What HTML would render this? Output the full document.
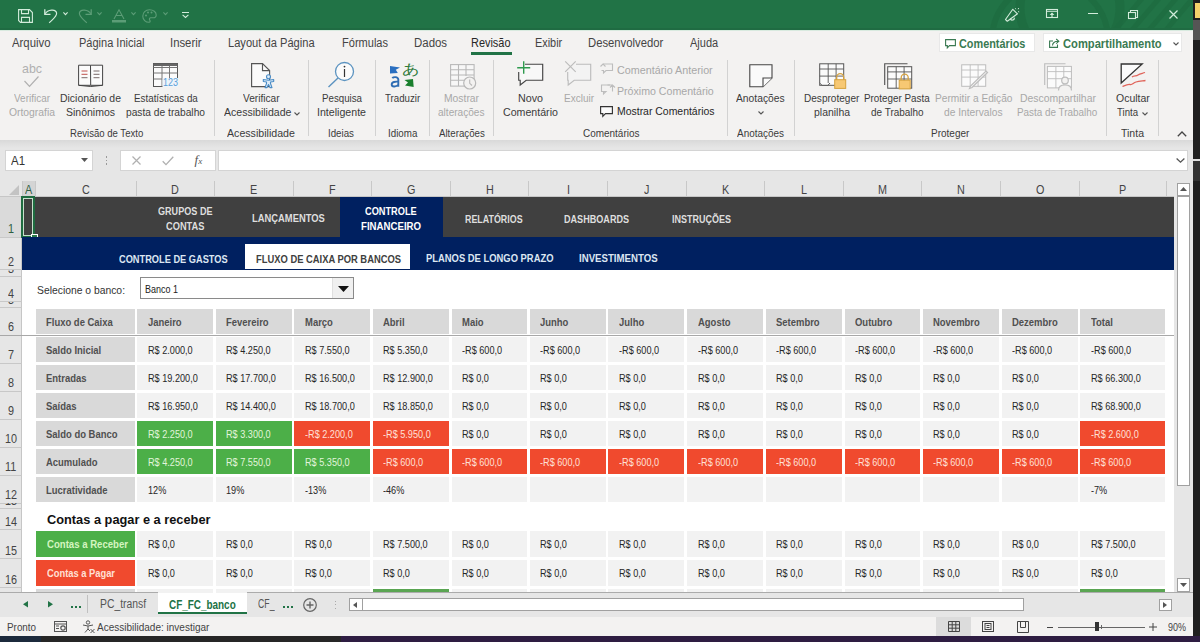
<!DOCTYPE html><html><head><meta charset="utf-8"><style>
html,body{margin:0;padding:0;}
body{width:1200px;height:642px;position:relative;overflow:hidden;background:#f3f2f1;font-family:"Liberation Sans",sans-serif;}
.a{position:absolute;}
.t{position:absolute;white-space:pre;transform-origin:0 50%;}
svg{overflow:visible;}
</style></head><body>
<div class="a" style="left:0px;top:0px;width:1193px;height:29.5px;background:#217346;"></div>
<svg class="a" style="left:900px;top:0;overflow:hidden" width="293" height="28" viewBox="0 0 293 28"><g fill="none" stroke="#1d6b40" stroke-opacity="0.75"><circle cx="170" cy="8" r="50" stroke-width="9"/><circle cx="150" cy="40" r="58" stroke-width="6"/><path d="M215 30L245 -5M232 30L262 -5M249 30L279 -5M266 30L293 -2" stroke-width="5"/></g></svg>
<div class="a" style="left:0px;top:27.5px;width:1193px;height:2px;background:#1f6b42;"></div>
<div class="a" style="left:0px;top:29.5px;width:1193px;height:1px;background:#d8eadf;"></div>
<div class="a" style="left:1193px;top:0px;width:7px;height:642px;background:#1f1f1f;"></div>
<div class="a" style="left:1195px;top:2.5px;width:5px;height:15px;background:#f5d16a;"></div>
<div class="a" style="left:1193px;top:20px;width:7px;height:20px;background:#555;"></div>
<div class="a" style="left:1193px;top:159px;width:7px;height:1.5px;background:#e0e0e0;"></div>
<div class="a" style="left:1193px;top:160.5px;width:7px;height:20px;background:#333;"></div>
<svg class="a" style="left:18px;top:9px;" width="15" height="14" viewBox="0 0 15 14"><path d="M0.6 0.6H11.5L14.4 3.5V13.4H2.5L0.6 11.5Z M3.5 0.6V4.6H10.5V0.6 M3.5 13.4V8.4H11.5V13.4" stroke="#d3ecdb" stroke-width="1.1" fill="none"/></svg>
<svg class="a" style="left:44px;top:9px;" width="15" height="15" viewBox="0 0 15 15"><path d="M0.8 0.2V5.3H6.5" stroke="#d3ecdb" stroke-width="1.3" fill="none"/><path d="M1.2 4.8C3.5 0.5 12 -0.5 12.6 4.2C13 7.5 8.5 10.5 5.2 13.8" stroke="#d3ecdb" stroke-width="1.2" fill="none"/></svg>
<svg class="a" style="left:62.5px;top:12px;" width="5" height="3" viewBox="0 0 5 3"><path d="M0.4 0.4L2.5 2.6L4.6 0.4" stroke="#d3ecdb" stroke-width="1.1" fill="none"/></svg>
<svg class="a" style="left:78px;top:9px;" width="15" height="15" viewBox="0 0 15 15"><path d="M13.2 0.2V5.3H7.5" stroke="#5c9d77" stroke-width="1.3" fill="none"/><path d="M12.8 4.8C10.5 0.5 2 -0.5 1.4 4.2C1 7.5 5.5 10.5 8.8 13.8" stroke="#5c9d77" stroke-width="1.2" fill="none"/></svg>
<svg class="a" style="left:97px;top:12px;" width="5" height="3" viewBox="0 0 5 3"><path d="M0.4 0.4L2.5 2.6L4.6 0.4" stroke="#5c9d77" stroke-width="1.1" fill="none"/></svg>
<svg class="a" style="left:112px;top:9px;" width="14" height="14" viewBox="0 0 14 14"><path d="M2 10L7 0.8L12 10M4 6.5H10" stroke="#5c9d77" stroke-width="1.1" fill="none"/><rect x="0" y="11" width="14" height="2.5" fill="#5c9d77"/></svg>
<svg class="a" style="left:131px;top:12px;" width="5" height="3" viewBox="0 0 5 3"><path d="M0.4 0.4L2.5 2.6L4.6 0.4" stroke="#5c9d77" stroke-width="1.1" fill="none"/></svg>
<svg class="a" style="left:142px;top:9px;" width="15" height="14" viewBox="0 0 15 14"><path d="M7.5 0.8C3.5 0.8 0.8 3.7 0.8 7.2C0.8 10.7 3.6 13.3 7 13.3C8.6 13.3 8.3 11.7 7.6 10.8C7 10 7.6 8.8 8.7 8.8H11C12.8 8.8 14.2 7.6 14.2 5.9C14.2 3 11.3 0.8 7.5 0.8Z" stroke="#5c9d77" stroke-width="1.1" fill="none"/><circle cx="4" cy="6.5" r="1" fill="#5c9d77"/><circle cx="6" cy="3.5" r="1" fill="#5c9d77"/><circle cx="9.5" cy="3.5" r="1" fill="#5c9d77"/></svg>
<svg class="a" style="left:162.5px;top:12px;" width="5" height="3" viewBox="0 0 5 3"><path d="M0.4 0.4L2.5 2.6L4.6 0.4" stroke="#5c9d77" stroke-width="1.1" fill="none"/></svg>
<svg class="a" style="left:181.5px;top:11.5px;" width="7" height="6" viewBox="0 0 7 6"><path d="M0 0.5H7M0.6 2.8L3.5 5.5L6.4 2.8" stroke="#d3ecdb" stroke-width="1.1" fill="none"/></svg>
<svg class="a" style="left:1005px;top:8px;" width="15" height="15" viewBox="0 0 15 15"><path d="M0.5 11.5L7.8 1.3L12.5 5.8L2.3 13.3Z" stroke="#d3ecdb" stroke-width="1.1" fill="none" stroke-linejoin="round"/><path d="M5.3 10.6A2 2 0 0 0 9.2 9.6" stroke="#d3ecdb" stroke-width="1.1" fill="none"/><path d="M10.4 0.3L10.8 1.2M13.6 0.1L13.2 1.2M13.1 3.6L14.2 3.9" stroke="#d3ecdb" stroke-width="1"/></svg>
<svg class="a" style="left:1046px;top:9px;" width="12" height="9" viewBox="0 0 12 9"><rect x="0.5" y="0.5" width="11" height="8" fill="none" stroke="#d3ecdb" stroke-width="1.1"/><path d="M0.5 2.3H11.5" stroke="#d3ecdb"/><path d="M6 4.5V8" stroke="#d3ecdb" stroke-width="1.2"/><path d="M3.6 6L6 3.6L8.4 6Z" fill="#d3ecdb"/></svg>
<div class="a" style="left:1088px;top:13.3px;width:9.5px;height:1.1px;background:#d3ecdb;"></div>
<svg class="a" style="left:1128px;top:9.5px;" width="10" height="9" viewBox="0 0 10 9"><path d="M2.5 2.5V0.5H9.5V7.5H7.5" stroke="#d3ecdb" fill="none" stroke-width="1.1"/><rect x="0.5" y="2.5" width="7" height="6" fill="none" stroke="#d3ecdb" stroke-width="1.1"/></svg>
<svg class="a" style="left:1169px;top:9.5px;" width="9" height="9" viewBox="0 0 9 9"><path d="M0.5 0.5L8.5 8.5M8.5 0.5L0.5 8.5" stroke="#d3ecdb" stroke-width="1.2"/></svg>
<div class="t" style="left:12.30px;top:37.00px;font-size:12.5px;line-height:12.5px;color:#444;font-weight:400;transform:scaleX(0.9083);">Arquivo</div>
<div class="t" style="left:78.50px;top:37.00px;font-size:12.5px;line-height:12.5px;color:#444;font-weight:400;transform:scaleX(0.8809);">Página Inicial</div>
<div class="t" style="left:170.00px;top:37.00px;font-size:12.5px;line-height:12.5px;color:#444;font-weight:400;transform:scaleX(0.9070);">Inserir</div>
<div class="t" style="left:228.40px;top:37.00px;font-size:12.5px;line-height:12.5px;color:#444;font-weight:400;transform:scaleX(0.8900);">Layout da Página</div>
<div class="t" style="left:342.40px;top:37.00px;font-size:12.5px;line-height:12.5px;color:#444;font-weight:400;transform:scaleX(0.8830);">Fórmulas</div>
<div class="t" style="left:414.40px;top:37.00px;font-size:12.5px;line-height:12.5px;color:#444;font-weight:400;transform:scaleX(0.9160);">Dados</div>
<div class="t" style="left:471.20px;top:37.00px;font-size:12.5px;line-height:12.5px;color:#262626;font-weight:400;transform:scaleX(0.8746);">Revisão</div>
<div class="a" style="left:471px;top:52.3px;width:40.5px;height:2.6px;background:#217346;"></div>
<div class="t" style="left:534.70px;top:37.00px;font-size:12.5px;line-height:12.5px;color:#444;font-weight:400;transform:scaleX(0.8702);">Exibir</div>
<div class="t" style="left:588.00px;top:37.00px;font-size:12.5px;line-height:12.5px;color:#444;font-weight:400;transform:scaleX(0.9019);">Desenvolvedor</div>
<div class="t" style="left:689.90px;top:37.00px;font-size:12.5px;line-height:12.5px;color:#444;font-weight:400;transform:scaleX(0.8789);">Ajuda</div>
<div class="a" style="left:938.6px;top:33px;width:96px;height:19.3px;background:#ffffff;box-sizing:border-box;border:1px solid #e8e8e8;"></div>
<svg class="a" style="left:945px;top:38.5px;" width="11" height="10" viewBox="0 0 11 10"><path d="M0.6 0.6H10.4V6.6H4.5L2.3 8.8V6.6H0.6Z" stroke="#3a7a52" stroke-width="1.1" fill="none"/></svg>
<div class="t" style="left:959.30px;top:38.00px;font-size:12.5px;line-height:12.5px;color:#3a7a52;font-weight:700;transform:scaleX(0.8690);">Comentários</div>
<div class="a" style="left:1042.5px;top:33px;width:139.5px;height:19.3px;background:#ffffff;box-sizing:border-box;border:1px solid #e8e8e8;"></div>
<svg class="a" style="left:1049px;top:37.5px;" width="11" height="10" viewBox="0 0 11 10"><path d="M4 3H0.6V9.4H8.5V6.5" stroke="#3a7a52" stroke-width="1.1" fill="none"/><path d="M3.5 7.5C3.5 5 5.5 3.3 9 3.3M7.2 1L9.8 3.3L7.2 5.6" stroke="#3a7a52" stroke-width="1.1" fill="none"/></svg>
<div class="t" style="left:1063.30px;top:38.00px;font-size:12.5px;line-height:12.5px;color:#3a7a52;font-weight:700;transform:scaleX(0.8938);">Compartilhamento</div>
<svg class="a" style="left:1172.5px;top:41.8px;" width="6" height="4" viewBox="0 0 6 4"><path d="M0.5 0.5L3 3L5.5 0.5" stroke="#555" stroke-width="1.1" fill="none"/></svg>
<div class="a" style="left:214.1px;top:60px;width:1px;height:76px;background:#d2d2d2;"></div>
<div class="a" style="left:307.5px;top:60px;width:1px;height:76px;background:#d2d2d2;"></div>
<div class="a" style="left:375.1px;top:60px;width:1px;height:76px;background:#d2d2d2;"></div>
<div class="a" style="left:429.1px;top:60px;width:1px;height:76px;background:#d2d2d2;"></div>
<div class="a" style="left:492.8px;top:60px;width:1px;height:76px;background:#d2d2d2;"></div>
<div class="a" style="left:726.9px;top:60px;width:1px;height:76px;background:#d2d2d2;"></div>
<div class="a" style="left:793.9px;top:60px;width:1px;height:76px;background:#d2d2d2;"></div>
<div class="a" style="left:1106.1px;top:60px;width:1px;height:76px;background:#d2d2d2;"></div>
<div class="a" style="left:1157.9px;top:60px;width:1px;height:76px;background:#d2d2d2;"></div>
<div class="t" style="left:14.00px;top:93.00px;font-size:11.5px;line-height:11.5px;color:#a8a8a8;font-weight:400;transform:scaleX(0.8666);">Verificar</div>
<div class="t" style="left:9.00px;top:107.00px;font-size:11.5px;line-height:11.5px;color:#a8a8a8;font-weight:400;transform:scaleX(0.8996);">Ortografia</div>
<div class="t" style="left:21.70px;top:62.00px;font-size:13.5px;line-height:13.5px;color:#b0b0b0;font-weight:400;transform:scaleX(0.9188);">abc</div>
<svg class="a" style="left:24px;top:76px;" width="15" height="11" viewBox="0 0 15 11"><path d="M0.5 5L5.5 10.3L14.5 0.5" stroke="#b0b0b0" stroke-width="1.2" fill="none"/></svg>
<div class="t" style="left:60.00px;top:93.00px;font-size:11.5px;line-height:11.5px;color:#3b3b3b;font-weight:400;transform:scaleX(0.9088);">Dicionário de</div>
<div class="t" style="left:66.00px;top:107.00px;font-size:11.5px;line-height:11.5px;color:#3b3b3b;font-weight:400;transform:scaleX(0.9126);">Sinônimos</div>
<svg class="a" style="left:77.5px;top:63.5px;" width="26" height="23" viewBox="0 0 26 23"><path d="M0.6 1.2H12.5L12.7 21.3H0.6Z M12.7 1.2H24.6V21.3H12.7 M0.6 21.3L12.7 22.5L24.6 21.3" stroke="#444" stroke-width="1" fill="#fbfbfb"/><path d="M3.5 7H9.5M3.5 10.3H9.5" stroke="#c0504d" stroke-width="1"/><path d="M3.5 13.7H9.5M15.5 7H21.5M15.5 10.3H21.5M15.5 13.7H21.5" stroke="#7a6a6a" stroke-width="1"/></svg>
<div class="t" style="left:133.60px;top:93.00px;font-size:11.5px;line-height:11.5px;color:#3b3b3b;font-weight:400;transform:scaleX(0.8531);">Estatísticas da</div>
<div class="t" style="left:126.00px;top:107.00px;font-size:11.5px;line-height:11.5px;color:#3b3b3b;font-weight:400;transform:scaleX(0.8889);">pasta de trabalho</div>
<svg class="a" style="left:153px;top:63px;" width="26" height="25" viewBox="0 0 26 25"><rect x="0.5" y="0.5" width="24" height="23" fill="#fbfbfb" stroke="#555" stroke-width="1"/><rect x="0.5" y="0.5" width="24" height="2.5" fill="#666"/><path d="M0.5 4.5H24.5M0.5 10H24.5M0.5 16H24.5M9 3V23.5M16.5 3V23.5" stroke="#777" stroke-width="1"/><rect x="9.5" y="15" width="15.5" height="9" fill="#eef4fa"/></svg>
<div class="t" style="left:163.00px;top:77.00px;font-size:11.5px;line-height:11.5px;color:#5a9fd8;font-weight:400;transform:scaleX(0.7817);">123</div>
<div class="t" style="left:70.30px;top:128.00px;font-size:11.2px;line-height:11.2px;color:#3b3b3b;font-weight:400;transform:scaleX(0.8552);">Revisão de Texto</div>
<div class="t" style="left:243.00px;top:93.00px;font-size:11.5px;line-height:11.5px;color:#3b3b3b;font-weight:400;transform:scaleX(0.8810);">Verificar</div>
<div class="t" style="left:223.60px;top:107.00px;font-size:11.5px;line-height:11.5px;color:#3b3b3b;font-weight:400;transform:scaleX(0.9168);">Acessibilidade</div>
<svg class="a" style="left:294px;top:111.5px;" width="6" height="4" viewBox="0 0 6 4"><path d="M0.5 0.5L3 3L5.5 0.5" stroke="#555" stroke-width="1.1" fill="none"/></svg>
<svg class="a" style="left:251px;top:63px;" width="25" height="26" viewBox="0 0 25 26"><path d="M0.6 0.6H11.5L18.6 7.6V23.6H0.6Z" fill="#fbfbfb" stroke="#555" stroke-width="1.15"/><path d="M11.5 0.6V7.6H18.6" fill="none" stroke="#555" stroke-width="1.15"/><circle cx="17.5" cy="13.8" r="2" fill="#dcebf8" stroke="#4a8cc6" stroke-width="1.1"/><path d="M12.3 16.5L17.5 17.3L22.7 16.5V18.5L19.5 19V20.5L21 24.6H19L17.5 21.5L16 24.6H14L15.5 20.5V19L12.3 18.5Z" fill="#dcebf8" stroke="#4a8cc6" stroke-width="1.1" stroke-linejoin="round"/></svg>
<div class="t" style="left:227.00px;top:128.00px;font-size:11.2px;line-height:11.2px;color:#3b3b3b;font-weight:400;transform:scaleX(0.9497);">Acessibilidade</div>
<div class="t" style="left:321.60px;top:93.00px;font-size:11.5px;line-height:11.5px;color:#3b3b3b;font-weight:400;transform:scaleX(0.8455);">Pesquisa</div>
<div class="t" style="left:317.00px;top:107.00px;font-size:11.5px;line-height:11.5px;color:#3b3b3b;font-weight:400;transform:scaleX(0.9233);">Inteligente</div>
<svg class="a" style="left:327px;top:61px;" width="30" height="28" viewBox="0 0 30 28"><circle cx="17.5" cy="10.5" r="9" fill="#fbfbfb" stroke="#5b93c0" stroke-width="1.3"/><path d="M11 17L1.5 26" stroke="#5b93c0" stroke-width="1.4"/><circle cx="17.5" cy="5.6" r="0.9" fill="#333"/><path d="M17.5 8V16" stroke="#333" stroke-width="1.2"/></svg>
<div class="t" style="left:328.00px;top:128.00px;font-size:11.2px;line-height:11.2px;color:#3b3b3b;font-weight:400;transform:scaleX(0.8699);">Ideias</div>
<div class="t" style="left:384.80px;top:93.00px;font-size:11.5px;line-height:11.5px;color:#3b3b3b;font-weight:400;transform:scaleX(0.8431);">Traduzir</div>
<svg class="a" style="left:389px;top:62px;" width="27" height="26" viewBox="0 0 27 26"><path d="M1 4L11 5.5L6.8 7.8L8.8 11L1 11.5Z" fill="#2a6fc0"/><path d="M15.5 18L19 20.5L16 23.5L24.7 25L24 17Z" fill="#1a7f2e"/><path d="M3.3 16.2C4.5 14.7 8.8 14.6 9.3 17.3V24.8M9.3 19.8C6.8 19.4 2.7 19.9 2.7 22.4C2.7 24.9 6.8 25.2 9.3 22.9" stroke="#2f6db3" stroke-width="1.9" fill="none"/></svg>
<div class="t" style="left:401.50px;top:63.00px;font-size:13.5px;line-height:13.5px;color:#2d7a3a;font-weight:400;transform:scaleX(1.2346);">あ</div>
<div class="t" style="left:387.60px;top:128.00px;font-size:11.2px;line-height:11.2px;color:#3b3b3b;font-weight:400;transform:scaleX(0.8745);">Idioma</div>
<div class="t" style="left:444.00px;top:93.00px;font-size:11.5px;line-height:11.5px;color:#a8a8a8;font-weight:400;transform:scaleX(0.8980);">Mostrar</div>
<div class="t" style="left:438.00px;top:107.00px;font-size:11.5px;line-height:11.5px;color:#a8a8a8;font-weight:400;transform:scaleX(0.8764);">alterações</div>
<svg class="a" style="left:449.5px;top:63.5px;" width="28" height="26" viewBox="0 0 28 26"><rect x="0.6" y="0.6" width="23.5" height="21.5" fill="#f7f7f7" stroke="#b8b8b8" stroke-width="1.1"/><path d="M0.6 5.7H24M0.6 11H24M0.6 16.2H14M8.5 0.6V22M16 0.6V12" stroke="#b8b8b8" stroke-width="1.1"/><circle cx="19.7" cy="19" r="6" fill="#f3f2f1" stroke="#b8b8b8" stroke-width="1.2"/><path d="M19.7 15.5V19.3L22 21.5" stroke="#b8b8b8" stroke-width="1.1" fill="none"/></svg>
<div class="t" style="left:438.70px;top:128.00px;font-size:11.2px;line-height:11.2px;color:#3b3b3b;font-weight:400;transform:scaleX(0.8655);">Alterações</div>
<div class="t" style="left:518.00px;top:93.00px;font-size:11.5px;line-height:11.5px;color:#3b3b3b;font-weight:400;transform:scaleX(0.9312);">Novo</div>
<div class="t" style="left:503.00px;top:107.00px;font-size:11.5px;line-height:11.5px;color:#3b3b3b;font-weight:400;transform:scaleX(0.9235);">Comentário</div>
<svg class="a" style="left:516px;top:60px;" width="28" height="26" viewBox="0 0 28 26"><path d="M9 4.2H26.7V20.2H10.2L4.2 25V20.2H2.7V12" fill="#f8f8f8" stroke="#444" stroke-width="1.15"/><path d="M7.7 1.3V13.7M1.2 7.7H14.2" stroke="#2e9a4e" stroke-width="1.4"/></svg>
<div class="t" style="left:564.00px;top:93.00px;font-size:11.5px;line-height:11.5px;color:#a8a8a8;font-weight:400;transform:scaleX(0.8694);">Excluir</div>
<svg class="a" style="left:564px;top:60px;" width="28" height="26" viewBox="0 0 28 26"><path d="M12 4.2H26.7V20.2H10.2L4.2 25V20.2H3.7V12" fill="#f3f3f3" stroke="#bcbcbc" stroke-width="1.15"/><path d="M1.2 1.3L11.7 11.8M11.7 1.3L1.2 11.8" stroke="#bcbcbc" stroke-width="1.2"/></svg>
<svg class="a" style="left:600px;top:63px;" width="13" height="11" viewBox="0 0 13 11"><path d="M3 1H12.5V7.5H6L3.5 10V7.5H1.5" fill="none" stroke="#bdbdbd" stroke-width="1.1"/><path d="M0.5 3.5L3 1L5.5 3.5" fill="none" stroke="#bdbdbd" stroke-width="1.1"/></svg>
<div class="t" style="left:616.80px;top:65.00px;font-size:11.5px;line-height:11.5px;color:#a8a8a8;font-weight:400;transform:scaleX(0.9357);">Comentário Anterior</div>
<svg class="a" style="left:600px;top:84px;" width="13" height="11" viewBox="0 0 13 11"><path d="M10 1H1.5V7.5H6L3.5 10V7.5" fill="none" stroke="#bdbdbd" stroke-width="1.1"/><path d="M7.5 1H12.5V7.5M10 3.5L12.5 1L15 3.5" fill="none" stroke="#bdbdbd" stroke-width="1.1"/></svg>
<div class="t" style="left:616.80px;top:86.00px;font-size:11.5px;line-height:11.5px;color:#a8a8a8;font-weight:400;transform:scaleX(0.9226);">Próximo Comentário</div>
<svg class="a" style="left:600px;top:105.5px;" width="13" height="11" viewBox="0 0 13 11"><path d="M0.6 0.6H12.4V7.6H5.5L2.8 10.4V7.6H0.6Z" fill="#fbfbfb" stroke="#333" stroke-width="1.15"/></svg>
<div class="t" style="left:616.80px;top:106.00px;font-size:11.5px;line-height:11.5px;color:#262626;font-weight:400;transform:scaleX(0.9081);">Mostrar Comentários</div>
<div class="t" style="left:582.70px;top:128.00px;font-size:11.2px;line-height:11.2px;color:#3b3b3b;font-weight:400;transform:scaleX(0.8898);">Comentários</div>
<svg class="a" style="left:748.5px;top:63.5px;" width="24" height="24" viewBox="0 0 24 24"><path d="M0.8 0.8H23V14L14 22.8H0.8Z" fill="#fafafa" stroke="#444" stroke-width="1.1"/><path d="M23 14H14V22.8" fill="#fafafa" stroke="#444" stroke-width="1.1"/></svg>
<div class="t" style="left:736.40px;top:93.00px;font-size:11.5px;line-height:11.5px;color:#3b3b3b;font-weight:400;transform:scaleX(0.8943);">Anotações</div>
<svg class="a" style="left:757.5px;top:110.5px;" width="6" height="4" viewBox="0 0 6 4"><path d="M0.5 0.5L3 3L5.5 0.5" stroke="#555" stroke-width="1.1" fill="none"/></svg>
<div class="t" style="left:737.00px;top:128.00px;font-size:11.2px;line-height:11.2px;color:#3b3b3b;font-weight:400;transform:scaleX(0.8880);">Anotações</div>
<svg class="a" style="left:818.5px;top:63px;" width="30" height="27" viewBox="0 0 30 27"><rect x="0.7" y="0.8" width="24" height="21.5" fill="#fbfbfb" stroke="#555" stroke-width="1"/><path d="M0.7 6.0H24.7M0.7 13.100000000000001H24.7M9.2 0.8V22.3M17.099999999999998 0.8V22.3" stroke="#555" stroke-width="0.9"/><path d="M0.7 20L3 22.3H9L11 20" stroke="#555" fill="#fbfbfb" stroke-width="1"/><path d="M17.7 16.7V14.2A3.5 3.5 0 0 1 24.7 14.2V16.7" fill="none" stroke="#d6a23e" stroke-width="1.3"/><rect x="15.7" y="16.7" width="11" height="8.7" fill="#f7c873" stroke="#d6a23e" stroke-width="1"/></svg>
<div class="t" style="left:803.60px;top:93.00px;font-size:11.5px;line-height:11.5px;color:#3b3b3b;font-weight:400;transform:scaleX(0.8754);">Desproteger</div>
<div class="t" style="left:813.60px;top:107.00px;font-size:11.5px;line-height:11.5px;color:#3b3b3b;font-weight:400;transform:scaleX(0.9081);">planilha</div>
<svg class="a" style="left:884px;top:62.5px;" width="30" height="28" viewBox="0 0 30 28"><path d="M0.7 22V0.7H23.5" stroke="#555" fill="none" stroke-width="1.15"/><rect x="3.7" y="3.7" width="24" height="21.5" fill="#fbfbfb" stroke="#555" stroke-width="1"/><path d="M3.7 8.9H27.7M3.7 16.0H27.7M12.2 3.7V25.2M20.099999999999998 3.7V25.2" stroke="#555" stroke-width="0.9"/><path d="M17.2 17.2V14.7A3.5 3.5 0 0 1 24.2 14.7V17.2" fill="none" stroke="#d6a23e" stroke-width="1.3"/><rect x="15.2" y="17.2" width="11" height="8.7" fill="#f7c873" stroke="#d6a23e" stroke-width="1"/></svg>
<div class="t" style="left:864.00px;top:93.00px;font-size:11.5px;line-height:11.5px;color:#3b3b3b;font-weight:400;transform:scaleX(0.8551);">Proteger Pasta</div>
<div class="t" style="left:871.00px;top:107.00px;font-size:11.5px;line-height:11.5px;color:#3b3b3b;font-weight:400;transform:scaleX(0.8660);">de Trabalho</div>
<svg class="a" style="left:960.5px;top:64px;" width="30" height="26" viewBox="0 0 30 26"><rect x="0.7" y="0.8" width="24" height="21.5" fill="#fbfbfb" stroke="#bdbdbd" stroke-width="1"/><path d="M0.7 6.0H24.7M0.7 13.100000000000001H24.7M9.2 0.8V22.3M17.099999999999998 0.8V22.3" stroke="#bdbdbd" stroke-width="0.9"/><path d="M26.5 8.5L11 23.5L8.5 24.5L9.5 22L25 7Z" fill="#f3f2f1" stroke="#bdbdbd" stroke-width="1.2"/></svg>
<div class="t" style="left:934.50px;top:93.00px;font-size:11.5px;line-height:11.5px;color:#a8a8a8;font-weight:400;transform:scaleX(0.8851);">Permitir a Edição</div>
<div class="t" style="left:944.00px;top:107.00px;font-size:11.5px;line-height:11.5px;color:#a8a8a8;font-weight:400;transform:scaleX(0.8884);">de Intervalos</div>
<svg class="a" style="left:1043.5px;top:62.5px;" width="30" height="28" viewBox="0 0 30 28"><path d="M0.7 22V0.7H21.5" stroke="#bdbdbd" fill="none" stroke-width="1.15"/><rect x="3.4" y="3.4" width="24" height="21.5" fill="#fbfbfb" stroke="#bdbdbd" stroke-width="1"/><path d="M3.4 8.6H27.4M3.4 15.700000000000001H27.4M11.9 3.4V24.9M19.799999999999997 3.4V24.9" stroke="#bdbdbd" stroke-width="0.9"/><circle cx="21" cy="17.5" r="3.3" fill="#f3f2f1" stroke="#bdbdbd" stroke-width="1.2"/><path d="M14.5 27.5C14.5 23.5 17.5 21.8 21 21.8C24.5 21.8 27.5 23.5 27.5 27.5" fill="#f3f2f1" stroke="#bdbdbd" stroke-width="1.2"/></svg>
<div class="t" style="left:1019.60px;top:93.00px;font-size:11.5px;line-height:11.5px;color:#a8a8a8;font-weight:400;transform:scaleX(0.9065);">Descompartilhar</div>
<div class="t" style="left:1016.70px;top:107.00px;font-size:11.5px;line-height:11.5px;color:#a8a8a8;font-weight:400;transform:scaleX(0.8602);">Pasta de Trabalho</div>
<div class="t" style="left:931.00px;top:128.00px;font-size:11.2px;line-height:11.2px;color:#3b3b3b;font-weight:400;transform:scaleX(0.8939);">Proteger</div>
<svg class="a" style="left:1119.5px;top:62.5px;" width="28" height="26" viewBox="0 0 28 26"><path d="M1.2 1H22.2L1.2 20Z" fill="#fbfbfb" stroke="#333" stroke-width="1.3"/><path d="M2.5 23.5C6 22 8 21 10 21.5C12.5 22 13 20 16 19C19 18 22 18 25.5 17.5" stroke="#e0645a" stroke-width="1.3" fill="none"/><path d="M12 14C14 12 16 13.5 18 12C20 10.5 22 10.5 25 9.5" stroke="#e0645a" stroke-width="1.3" fill="none"/></svg>
<div class="t" style="left:1115.60px;top:93.00px;font-size:11.5px;line-height:11.5px;color:#3b3b3b;font-weight:400;transform:scaleX(0.9119);">Ocultar</div>
<div class="t" style="left:1117.00px;top:107.00px;font-size:11.5px;line-height:11.5px;color:#3b3b3b;font-weight:400;transform:scaleX(0.8353);">Tinta</div>
<svg class="a" style="left:1141.5px;top:111.5px;" width="6" height="4" viewBox="0 0 6 4"><path d="M0.5 0.5L3 3L5.5 0.5" stroke="#555" stroke-width="1.1" fill="none"/></svg>
<div class="t" style="left:1121.00px;top:128.00px;font-size:11.2px;line-height:11.2px;color:#3b3b3b;font-weight:400;transform:scaleX(0.9394);">Tinta</div>
<svg class="a" style="left:1176.5px;top:131px;" width="10" height="6" viewBox="0 0 10 6"><path d="M0.8 5.2L5 1L9.2 5.2" stroke="#444" stroke-width="1.3" fill="none"/></svg>
<div class="a" style="left:0px;top:140px;width:1193px;height:41px;background:#e6e6e6;"></div>
<div class="a" style="left:0px;top:140px;width:1193px;height:8px;background:linear-gradient(#d9d9d9,#e6e6e6);"></div>
<div class="a" style="left:5px;top:150px;width:88px;height:21px;background:#ffffff;box-sizing:border-box;border:1px solid #d4d4d4;"></div>
<div class="t" style="left:11.00px;top:155.00px;font-size:12.5px;line-height:12.5px;color:#333;font-weight:400;transform:scaleX(0.9156);">A1</div>
<svg class="a" style="left:81px;top:158px;" width="7" height="4" viewBox="0 0 7 4"><path d="M0 0H7L3.5 4Z" fill="#555"/></svg>
<div class="a" style="left:105.5px;top:156.3px;width:1.5px;height:1.5px;background:#999;"></div>
<div class="a" style="left:105.5px;top:159.8px;width:1.5px;height:1.5px;background:#999;"></div>
<div class="a" style="left:105.5px;top:163.3px;width:1.5px;height:1.5px;background:#999;"></div>
<div class="a" style="left:120px;top:150px;width:95.5px;height:21px;background:#ffffff;box-sizing:border-box;border:1px solid #d4d4d4;"></div>
<svg class="a" style="left:132px;top:156px;" width="9" height="9" viewBox="0 0 9 9"><path d="M0.5 0.5L8.5 8.5M8.5 0.5L0.5 8.5" stroke="#b0b0b0" stroke-width="1.2" fill="none"/></svg>
<svg class="a" style="left:162px;top:155.5px;" width="12" height="10" viewBox="0 0 12 10"><path d="M0.7 5.2L4 8.6L11.3 0.8" stroke="#b0b0b0" stroke-width="1.3" fill="none"/></svg>
<div class="t" style="left:194.5px;top:152.5px;font-family:'Liberation Serif';font-style:italic;font-size:13px;line-height:13px;color:#555;">f<span style="font-size:9px">x</span></div>
<div class="a" style="left:218px;top:150px;width:970px;height:21px;background:#ffffff;box-sizing:border-box;border:1px solid #d4d4d4;"></div>
<svg class="a" style="left:1176px;top:158px;" width="9" height="5" viewBox="0 0 9 5"><path d="M0.6 0.6L4.5 4.2L8.4 0.6" stroke="#555" stroke-width="1.3" fill="none"/></svg>
<div class="a" style="left:0px;top:181px;width:1174px;height:16px;background:#e6e6e6;"></div>
<div class="a" style="left:0px;top:197px;width:22px;height:395.5px;background:#e6e6e6;"></div>
<div class="a" style="left:22px;top:197px;width:1152px;height:395.5px;background:#ffffff;"></div>
<svg class="a" style="left:9px;top:185px;" width="10" height="10" viewBox="0 0 10 10"><path d="M10 0V10H0Z" fill="#c3c3c3"/></svg>
<div class="a" style="left:22.4px;top:181px;width:12.6px;height:14.5px;background:#d4d4d4;"></div>
<div class="a" style="left:35px;top:181px;width:1px;height:16px;background:#c8c8c8;"></div>
<div class="t" style="left:24.90px;top:184.00px;font-size:12px;line-height:12px;color:#2e5e42;font-weight:400;transform:scaleX(0.9000);">A</div>
<div class="a" style="left:136px;top:181px;width:1px;height:16px;background:#c8c8c8;"></div>
<div class="t" style="left:81.60px;top:184.00px;font-size:12px;line-height:12px;color:#444;font-weight:400;transform:scaleX(0.9000);">C</div>
<div class="a" style="left:214px;top:181px;width:1px;height:16px;background:#c8c8c8;"></div>
<div class="t" style="left:171.40px;top:184.00px;font-size:12px;line-height:12px;color:#444;font-weight:400;transform:scaleX(0.9000);">D</div>
<div class="a" style="left:293px;top:181px;width:1px;height:16px;background:#c8c8c8;"></div>
<div class="t" style="left:250.30px;top:184.00px;font-size:12px;line-height:12px;color:#444;font-weight:400;transform:scaleX(0.9000);">E</div>
<div class="a" style="left:371px;top:181px;width:1px;height:16px;background:#c8c8c8;"></div>
<div class="t" style="left:329.20px;top:184.00px;font-size:12px;line-height:12px;color:#444;font-weight:400;transform:scaleX(0.9000);">F</div>
<div class="a" style="left:450px;top:181px;width:1px;height:16px;background:#c8c8c8;"></div>
<div class="t" style="left:406.95px;top:184.00px;font-size:12px;line-height:12px;color:#444;font-weight:400;transform:scaleX(0.9000);">G</div>
<div class="a" style="left:528px;top:181px;width:1px;height:16px;background:#c8c8c8;"></div>
<div class="t" style="left:485.75px;top:184.00px;font-size:12px;line-height:12px;color:#444;font-weight:400;transform:scaleX(0.9000);">H</div>
<div class="a" style="left:607px;top:181px;width:1px;height:16px;background:#c8c8c8;"></div>
<div class="t" style="left:566.60px;top:184.00px;font-size:12px;line-height:12px;color:#444;font-weight:400;transform:scaleX(0.9000);">I</div>
<div class="a" style="left:686px;top:181px;width:1px;height:16px;background:#c8c8c8;"></div>
<div class="t" style="left:644.00px;top:184.00px;font-size:12px;line-height:12px;color:#444;font-weight:400;transform:scaleX(0.9000);">J</div>
<div class="a" style="left:764px;top:181px;width:1px;height:16px;background:#c8c8c8;"></div>
<div class="t" style="left:721.70px;top:184.00px;font-size:12px;line-height:12px;color:#444;font-weight:400;transform:scaleX(0.9000);">K</div>
<div class="a" style="left:843px;top:181px;width:1px;height:16px;background:#c8c8c8;"></div>
<div class="t" style="left:801.10px;top:184.00px;font-size:12px;line-height:12px;color:#444;font-weight:400;transform:scaleX(0.9000);">L</div>
<div class="a" style="left:921px;top:181px;width:1px;height:16px;background:#c8c8c8;"></div>
<div class="t" style="left:878.15px;top:184.00px;font-size:12px;line-height:12px;color:#444;font-weight:400;transform:scaleX(0.9000);">M</div>
<div class="a" style="left:1000px;top:181px;width:1px;height:16px;background:#c8c8c8;"></div>
<div class="t" style="left:957.20px;top:184.00px;font-size:12px;line-height:12px;color:#444;font-weight:400;transform:scaleX(0.9000);">N</div>
<div class="a" style="left:1079px;top:181px;width:1px;height:16px;background:#c8c8c8;"></div>
<div class="t" style="left:1035.75px;top:184.00px;font-size:12px;line-height:12px;color:#444;font-weight:400;transform:scaleX(0.9000);">O</div>
<div class="a" style="left:1166px;top:181px;width:1px;height:16px;background:#c8c8c8;"></div>
<div class="t" style="left:1119.30px;top:184.00px;font-size:12px;line-height:12px;color:#444;font-weight:400;transform:scaleX(0.9000);">P</div>
<div class="a" style="left:22px;top:181px;width:1px;height:16px;background:#c8c8c8;"></div>
<div class="a" style="left:0px;top:196px;width:1174px;height:1px;background:#c6c6c6;"></div>
<div class="a" style="left:21px;top:197px;width:1px;height:395.5px;background:#c6c6c6;"></div>
<div class="a" style="left:0px;top:237px;width:22px;height:1px;background:#c8c8c8;"></div>
<div class="a" style="left:0px;top:269px;width:22px;height:1px;background:#c8c8c8;"></div>
<div class="a" style="left:0px;top:276px;width:22px;height:1px;background:#c8c8c8;"></div>
<div class="a" style="left:0px;top:301px;width:22px;height:1px;background:#c8c8c8;"></div>
<div class="a" style="left:0px;top:307px;width:22px;height:1px;background:#c8c8c8;"></div>
<div class="a" style="left:0px;top:335px;width:22px;height:1px;background:#c8c8c8;"></div>
<div class="a" style="left:0px;top:363px;width:22px;height:1px;background:#c8c8c8;"></div>
<div class="a" style="left:0px;top:391px;width:22px;height:1px;background:#c8c8c8;"></div>
<div class="a" style="left:0px;top:419px;width:22px;height:1px;background:#c8c8c8;"></div>
<div class="a" style="left:0px;top:447px;width:22px;height:1px;background:#c8c8c8;"></div>
<div class="a" style="left:0px;top:475px;width:22px;height:1px;background:#c8c8c8;"></div>
<div class="a" style="left:0px;top:503px;width:22px;height:1px;background:#c8c8c8;"></div>
<div class="a" style="left:0px;top:508px;width:22px;height:1px;background:#c8c8c8;"></div>
<div class="a" style="left:0px;top:529px;width:22px;height:1px;background:#c8c8c8;"></div>
<div class="a" style="left:0px;top:558px;width:22px;height:1px;background:#c8c8c8;"></div>
<div class="a" style="left:0px;top:587px;width:22px;height:1px;background:#c8c8c8;"></div>
<div class="a" style="left:0px;top:197px;width:21px;height:40px;background:#dadada;"></div>
<div class="a" style="left:0;top:197px;width:21px;height:40px;overflow:hidden"><div class="t" style="left:8.00px;top:26px;font-size:12px;line-height:12px;color:#2e5e42;transform:scaleX(0.9)">1</div></div>
<div class="a" style="left:0;top:237px;width:21px;height:32.5px;overflow:hidden"><div class="t" style="left:8.00px;top:19px;font-size:12px;line-height:12px;color:#444;transform:scaleX(0.9)">2</div></div>
<div class="a" style="left:0;top:269.5px;width:21px;height:6.800000000000011px;overflow:hidden"><div class="t" style="left:8.00px;top:-7px;font-size:12px;line-height:12px;color:#444;transform:scaleX(0.9)">3</div></div>
<div class="a" style="left:0;top:276.3px;width:21px;height:25.19999999999999px;overflow:hidden"><div class="t" style="left:8.00px;top:12px;font-size:12px;line-height:12px;color:#444;transform:scaleX(0.9)">4</div></div>
<div class="a" style="left:0;top:301.5px;width:21px;height:5.5px;overflow:hidden"><div class="t" style="left:8.00px;top:-8px;font-size:12px;line-height:12px;color:#444;transform:scaleX(0.9)">5</div></div>
<div class="a" style="left:0;top:307px;width:21px;height:28px;overflow:hidden"><div class="t" style="left:8.00px;top:14px;font-size:12px;line-height:12px;color:#444;transform:scaleX(0.9)">6</div></div>
<div class="a" style="left:0;top:335px;width:21px;height:28px;overflow:hidden"><div class="t" style="left:8.00px;top:14px;font-size:12px;line-height:12px;color:#444;transform:scaleX(0.9)">7</div></div>
<div class="a" style="left:0;top:363px;width:21px;height:28px;overflow:hidden"><div class="t" style="left:8.00px;top:14px;font-size:12px;line-height:12px;color:#444;transform:scaleX(0.9)">8</div></div>
<div class="a" style="left:0;top:391px;width:21px;height:28px;overflow:hidden"><div class="t" style="left:8.00px;top:14px;font-size:12px;line-height:12px;color:#444;transform:scaleX(0.9)">9</div></div>
<div class="a" style="left:0;top:419px;width:21px;height:28px;overflow:hidden"><div class="t" style="left:4.99px;top:14px;font-size:12px;line-height:12px;color:#444;transform:scaleX(0.9)">10</div></div>
<div class="a" style="left:0;top:447px;width:21px;height:28px;overflow:hidden"><div class="t" style="left:5.39px;top:14px;font-size:12px;line-height:12px;color:#444;transform:scaleX(0.9)">11</div></div>
<div class="a" style="left:0;top:475px;width:21px;height:28px;overflow:hidden"><div class="t" style="left:4.99px;top:14px;font-size:12px;line-height:12px;color:#444;transform:scaleX(0.9)">12</div></div>
<div class="a" style="left:0;top:503px;width:21px;height:5px;overflow:hidden"><div class="t" style="left:4.99px;top:-8px;font-size:12px;line-height:12px;color:#444;transform:scaleX(0.9)">13</div></div>
<div class="a" style="left:0;top:508px;width:21px;height:21px;overflow:hidden"><div class="t" style="left:4.99px;top:8px;font-size:12px;line-height:12px;color:#444;transform:scaleX(0.9)">14</div></div>
<div class="a" style="left:0;top:529px;width:21px;height:29px;overflow:hidden"><div class="t" style="left:4.99px;top:16px;font-size:12px;line-height:12px;color:#444;transform:scaleX(0.9)">15</div></div>
<div class="a" style="left:0;top:558px;width:21px;height:29px;overflow:hidden"><div class="t" style="left:4.99px;top:16px;font-size:12px;line-height:12px;color:#444;transform:scaleX(0.9)">16</div></div>
<div class="a" style="left:22px;top:197px;width:1152px;height:40px;background:#404040;"></div>
<div class="a" style="left:340px;top:197px;width:103px;height:40px;background:#002060;"></div>
<div class="t" style="left:158.00px;top:207.00px;font-size:10px;line-height:10px;color:#dedede;font-weight:700;transform:scaleX(0.9082);">GRUPOS DE</div>
<div class="t" style="left:166.00px;top:222.00px;font-size:10px;line-height:10px;color:#dedede;font-weight:700;transform:scaleX(0.9281);">CONTAS</div>
<div class="t" style="left:252.40px;top:214.00px;font-size:10px;line-height:10px;color:#dedede;font-weight:700;transform:scaleX(0.9382);">LANÇAMENTOS</div>
<div class="t" style="left:365.00px;top:207.00px;font-size:10px;line-height:10px;color:#ffffff;font-weight:700;transform:scaleX(0.9214);">CONTROLE</div>
<div class="t" style="left:360.60px;top:222.00px;font-size:10px;line-height:10px;color:#ffffff;font-weight:700;transform:scaleX(0.9659);">FINANCEIRO</div>
<div class="t" style="left:465.40px;top:215.00px;font-size:10px;line-height:10px;color:#dedede;font-weight:700;transform:scaleX(0.8887);">RELATÓRIOS</div>
<div class="t" style="left:564.40px;top:215.00px;font-size:10px;line-height:10px;color:#dedede;font-weight:700;transform:scaleX(0.9083);">DASHBOARDS</div>
<div class="t" style="left:671.50px;top:215.00px;font-size:10px;line-height:10px;color:#dedede;font-weight:700;transform:scaleX(0.9014);">INSTRUÇÕES</div>
<div class="a" style="left:21.4px;top:196.3px;width:14.1px;height:42.2px;box-sizing:border-box;border:2px solid #1e6b40;"></div>
<div class="a" style="left:23.4px;top:198.3px;width:10.1px;height:38.2px;box-sizing:border-box;border:1px solid #c6e0cc;"></div>
<div class="a" style="left:31.5px;top:235px;width:5px;height:4.6px;background:#2b7a4b;outline:1px solid #fff;"></div>
<div class="a" style="left:22px;top:237px;width:1152px;height:32.5px;background:#002060;"></div>
<div class="a" style="left:245px;top:244.4px;width:165.2px;height:25.1px;background:#ffffff;"></div>
<div class="t" style="left:119.30px;top:255.00px;font-size:10px;line-height:10px;color:#dce6f2;font-weight:700;transform:scaleX(0.9243);">CONTROLE DE GASTOS</div>
<div class="t" style="left:255.80px;top:255.00px;font-size:10px;line-height:10px;color:#404040;font-weight:700;transform:scaleX(0.9377);">FLUXO DE CAIXA POR BANCOS</div>
<div class="t" style="left:425.50px;top:254.00px;font-size:10px;line-height:10px;color:#dce6f2;font-weight:700;transform:scaleX(0.9405);">PLANOS DE LONGO PRAZO</div>
<div class="t" style="left:579.40px;top:254.00px;font-size:10px;line-height:10px;color:#dce6f2;font-weight:700;transform:scaleX(0.9645);">INVESTIMENTOS</div>
<div class="t" style="left:36.90px;top:285.00px;font-size:11px;line-height:11px;color:#333;font-weight:400;transform:scaleX(0.9405);">Selecione o banco:</div>
<div class="a" style="left:140px;top:277.2px;width:214px;height:22.2px;background:#ffffff;box-sizing:border-box;border:1px solid #8a8a8a;"></div>
<div class="a" style="left:332px;top:278.2px;width:21px;height:20.2px;background:#f0f0f0;box-sizing:border-box;border-left:1px solid #e0e0e0;"></div>
<svg class="a" style="left:337.5px;top:285.5px;" width="11" height="6" viewBox="0 0 11 6"><path d="M0 0H11L5.5 6Z" fill="#111"/></svg>
<div class="t" style="left:145.40px;top:284.00px;font-size:10.5px;line-height:10.5px;color:#222;font-weight:400;transform:scaleX(0.8565);">Banco 1</div>
<div class="a" style="left:36px;top:309px;width:98.5px;height:25px;background:#d9d9d9;"></div>
<div class="t" style="left:46.00px;top:317.00px;font-size:11px;line-height:11px;color:#505050;font-weight:700;transform:scaleX(0.8600);">Fluxo de Caixa</div>
<div class="a" style="left:137px;top:309px;width:76.1px;height:25px;background:#d9d9d9;"></div>
<div class="t" style="left:147.50px;top:317.00px;font-size:11px;line-height:11px;color:#505050;font-weight:700;transform:scaleX(0.8600);">Janeiro</div>
<div class="a" style="left:215.6px;top:309px;width:76.1px;height:25px;background:#d9d9d9;"></div>
<div class="t" style="left:226.10px;top:317.00px;font-size:11px;line-height:11px;color:#505050;font-weight:700;transform:scaleX(0.8600);">Fevereiro</div>
<div class="a" style="left:294.2px;top:309px;width:76.1px;height:25px;background:#d9d9d9;"></div>
<div class="t" style="left:304.70px;top:317.00px;font-size:11px;line-height:11px;color:#505050;font-weight:700;transform:scaleX(0.8600);">Março</div>
<div class="a" style="left:372.8px;top:309px;width:76.2px;height:25px;background:#d9d9d9;"></div>
<div class="t" style="left:383.30px;top:317.00px;font-size:11px;line-height:11px;color:#505050;font-weight:700;transform:scaleX(0.8600);">Abril</div>
<div class="a" style="left:451.5px;top:309px;width:75.8px;height:25px;background:#d9d9d9;"></div>
<div class="t" style="left:462.00px;top:317.00px;font-size:11px;line-height:11px;color:#505050;font-weight:700;transform:scaleX(0.8600);">Maio</div>
<div class="a" style="left:529.8px;top:309px;width:76.1px;height:25px;background:#d9d9d9;"></div>
<div class="t" style="left:540.30px;top:317.00px;font-size:11px;line-height:11px;color:#505050;font-weight:700;transform:scaleX(0.8600);">Junho</div>
<div class="a" style="left:608.4px;top:309px;width:76.1px;height:25px;background:#d9d9d9;"></div>
<div class="t" style="left:618.90px;top:317.00px;font-size:11px;line-height:11px;color:#505050;font-weight:700;transform:scaleX(0.8600);">Julho</div>
<div class="a" style="left:687px;top:309px;width:76.1px;height:25px;background:#d9d9d9;"></div>
<div class="t" style="left:697.50px;top:317.00px;font-size:11px;line-height:11px;color:#505050;font-weight:700;transform:scaleX(0.8600);">Agosto</div>
<div class="a" style="left:765.6px;top:309px;width:76.5px;height:25px;background:#d9d9d9;"></div>
<div class="t" style="left:776.10px;top:317.00px;font-size:11px;line-height:11px;color:#505050;font-weight:700;transform:scaleX(0.8600);">Setembro</div>
<div class="a" style="left:844.6px;top:309px;width:75.6px;height:25px;background:#d9d9d9;"></div>
<div class="t" style="left:855.10px;top:317.00px;font-size:11px;line-height:11px;color:#505050;font-weight:700;transform:scaleX(0.8600);">Outubro</div>
<div class="a" style="left:922.7px;top:309px;width:76.3px;height:25px;background:#d9d9d9;"></div>
<div class="t" style="left:933.20px;top:317.00px;font-size:11px;line-height:11px;color:#505050;font-weight:700;transform:scaleX(0.8600);">Novembro</div>
<div class="a" style="left:1001.5px;top:309px;width:76.4px;height:25px;background:#d9d9d9;"></div>
<div class="t" style="left:1012.00px;top:317.00px;font-size:11px;line-height:11px;color:#505050;font-weight:700;transform:scaleX(0.8600);">Dezembro</div>
<div class="a" style="left:1080.4px;top:309px;width:84.5px;height:25px;background:#d9d9d9;"></div>
<div class="t" style="left:1090.90px;top:317.00px;font-size:11px;line-height:11px;color:#505050;font-weight:700;transform:scaleX(0.8600);">Total</div>
<div class="a" style="left:36px;top:336.5px;width:98.5px;height:25.5px;background:#d9d9d9;"></div>
<div class="t" style="left:46.00px;top:345.00px;font-size:11px;line-height:11px;color:#505050;font-weight:700;transform:scaleX(0.8600);">Saldo Inicial</div>
<div class="a" style="left:36px;top:365px;width:98.5px;height:25px;background:#d9d9d9;"></div>
<div class="t" style="left:46.00px;top:373.00px;font-size:11px;line-height:11px;color:#505050;font-weight:700;transform:scaleX(0.8600);">Entradas</div>
<div class="a" style="left:36px;top:393px;width:98.5px;height:25px;background:#d9d9d9;"></div>
<div class="t" style="left:46.00px;top:401.00px;font-size:11px;line-height:11px;color:#505050;font-weight:700;transform:scaleX(0.8600);">Saídas</div>
<div class="a" style="left:36px;top:421px;width:98.5px;height:25px;background:#d9d9d9;"></div>
<div class="t" style="left:46.00px;top:429.00px;font-size:11px;line-height:11px;color:#505050;font-weight:700;transform:scaleX(0.8600);">Saldo do Banco</div>
<div class="a" style="left:36px;top:449px;width:98.5px;height:25px;background:#d9d9d9;"></div>
<div class="t" style="left:46.00px;top:457.00px;font-size:11px;line-height:11px;color:#505050;font-weight:700;transform:scaleX(0.8600);">Acumulado</div>
<div class="a" style="left:36px;top:477px;width:98.5px;height:25px;background:#d9d9d9;"></div>
<div class="t" style="left:46.00px;top:485.00px;font-size:11px;line-height:11px;color:#505050;font-weight:700;transform:scaleX(0.8600);">Lucratividade</div>
<div class="a" style="left:137px;top:336.5px;width:76.1px;height:25.5px;background:#f2f2f2;"></div>
<div class="t" style="left:147.50px;top:345.00px;font-size:11px;line-height:11px;color:#262626;font-weight:400;transform:scaleX(0.8300);">R$ 2.000,0</div>
<div class="a" style="left:215.6px;top:336.5px;width:76.1px;height:25.5px;background:#f2f2f2;"></div>
<div class="t" style="left:226.10px;top:345.00px;font-size:11px;line-height:11px;color:#262626;font-weight:400;transform:scaleX(0.8300);">R$ 4.250,0</div>
<div class="a" style="left:294.2px;top:336.5px;width:76.1px;height:25.5px;background:#f2f2f2;"></div>
<div class="t" style="left:304.70px;top:345.00px;font-size:11px;line-height:11px;color:#262626;font-weight:400;transform:scaleX(0.8300);">R$ 7.550,0</div>
<div class="a" style="left:372.8px;top:336.5px;width:76.2px;height:25.5px;background:#f2f2f2;"></div>
<div class="t" style="left:383.30px;top:345.00px;font-size:11px;line-height:11px;color:#262626;font-weight:400;transform:scaleX(0.8300);">R$ 5.350,0</div>
<div class="a" style="left:451.5px;top:336.5px;width:75.8px;height:25.5px;background:#f2f2f2;"></div>
<div class="t" style="left:462.00px;top:345.00px;font-size:11px;line-height:11px;color:#262626;font-weight:400;transform:scaleX(0.8300);">-R$ 600,0</div>
<div class="a" style="left:529.8px;top:336.5px;width:76.1px;height:25.5px;background:#f2f2f2;"></div>
<div class="t" style="left:540.30px;top:345.00px;font-size:11px;line-height:11px;color:#262626;font-weight:400;transform:scaleX(0.8300);">-R$ 600,0</div>
<div class="a" style="left:608.4px;top:336.5px;width:76.1px;height:25.5px;background:#f2f2f2;"></div>
<div class="t" style="left:618.90px;top:345.00px;font-size:11px;line-height:11px;color:#262626;font-weight:400;transform:scaleX(0.8300);">-R$ 600,0</div>
<div class="a" style="left:687px;top:336.5px;width:76.1px;height:25.5px;background:#f2f2f2;"></div>
<div class="t" style="left:697.50px;top:345.00px;font-size:11px;line-height:11px;color:#262626;font-weight:400;transform:scaleX(0.8300);">-R$ 600,0</div>
<div class="a" style="left:765.6px;top:336.5px;width:76.5px;height:25.5px;background:#f2f2f2;"></div>
<div class="t" style="left:776.10px;top:345.00px;font-size:11px;line-height:11px;color:#262626;font-weight:400;transform:scaleX(0.8300);">-R$ 600,0</div>
<div class="a" style="left:844.6px;top:336.5px;width:75.6px;height:25.5px;background:#f2f2f2;"></div>
<div class="t" style="left:855.10px;top:345.00px;font-size:11px;line-height:11px;color:#262626;font-weight:400;transform:scaleX(0.8300);">-R$ 600,0</div>
<div class="a" style="left:922.7px;top:336.5px;width:76.3px;height:25.5px;background:#f2f2f2;"></div>
<div class="t" style="left:933.20px;top:345.00px;font-size:11px;line-height:11px;color:#262626;font-weight:400;transform:scaleX(0.8300);">-R$ 600,0</div>
<div class="a" style="left:1001.5px;top:336.5px;width:76.4px;height:25.5px;background:#f2f2f2;"></div>
<div class="t" style="left:1012.00px;top:345.00px;font-size:11px;line-height:11px;color:#262626;font-weight:400;transform:scaleX(0.8300);">-R$ 600,0</div>
<div class="a" style="left:1080.4px;top:336.5px;width:84.5px;height:25.5px;background:#f2f2f2;"></div>
<div class="t" style="left:1090.90px;top:345.00px;font-size:11px;line-height:11px;color:#262626;font-weight:400;transform:scaleX(0.8300);">-R$ 600,0</div>
<div class="a" style="left:137px;top:365px;width:76.1px;height:25px;background:#f2f2f2;"></div>
<div class="t" style="left:147.50px;top:373.00px;font-size:11px;line-height:11px;color:#262626;font-weight:400;transform:scaleX(0.8300);">R$ 19.200,0</div>
<div class="a" style="left:215.6px;top:365px;width:76.1px;height:25px;background:#f2f2f2;"></div>
<div class="t" style="left:226.10px;top:373.00px;font-size:11px;line-height:11px;color:#262626;font-weight:400;transform:scaleX(0.8300);">R$ 17.700,0</div>
<div class="a" style="left:294.2px;top:365px;width:76.1px;height:25px;background:#f2f2f2;"></div>
<div class="t" style="left:304.70px;top:373.00px;font-size:11px;line-height:11px;color:#262626;font-weight:400;transform:scaleX(0.8300);">R$ 16.500,0</div>
<div class="a" style="left:372.8px;top:365px;width:76.2px;height:25px;background:#f2f2f2;"></div>
<div class="t" style="left:383.30px;top:373.00px;font-size:11px;line-height:11px;color:#262626;font-weight:400;transform:scaleX(0.8300);">R$ 12.900,0</div>
<div class="a" style="left:451.5px;top:365px;width:75.8px;height:25px;background:#f2f2f2;"></div>
<div class="t" style="left:462.00px;top:373.00px;font-size:11px;line-height:11px;color:#262626;font-weight:400;transform:scaleX(0.8300);">R$ 0,0</div>
<div class="a" style="left:529.8px;top:365px;width:76.1px;height:25px;background:#f2f2f2;"></div>
<div class="t" style="left:540.30px;top:373.00px;font-size:11px;line-height:11px;color:#262626;font-weight:400;transform:scaleX(0.8300);">R$ 0,0</div>
<div class="a" style="left:608.4px;top:365px;width:76.1px;height:25px;background:#f2f2f2;"></div>
<div class="t" style="left:618.90px;top:373.00px;font-size:11px;line-height:11px;color:#262626;font-weight:400;transform:scaleX(0.8300);">R$ 0,0</div>
<div class="a" style="left:687px;top:365px;width:76.1px;height:25px;background:#f2f2f2;"></div>
<div class="t" style="left:697.50px;top:373.00px;font-size:11px;line-height:11px;color:#262626;font-weight:400;transform:scaleX(0.8300);">R$ 0,0</div>
<div class="a" style="left:765.6px;top:365px;width:76.5px;height:25px;background:#f2f2f2;"></div>
<div class="t" style="left:776.10px;top:373.00px;font-size:11px;line-height:11px;color:#262626;font-weight:400;transform:scaleX(0.8300);">R$ 0,0</div>
<div class="a" style="left:844.6px;top:365px;width:75.6px;height:25px;background:#f2f2f2;"></div>
<div class="t" style="left:855.10px;top:373.00px;font-size:11px;line-height:11px;color:#262626;font-weight:400;transform:scaleX(0.8300);">R$ 0,0</div>
<div class="a" style="left:922.7px;top:365px;width:76.3px;height:25px;background:#f2f2f2;"></div>
<div class="t" style="left:933.20px;top:373.00px;font-size:11px;line-height:11px;color:#262626;font-weight:400;transform:scaleX(0.8300);">R$ 0,0</div>
<div class="a" style="left:1001.5px;top:365px;width:76.4px;height:25px;background:#f2f2f2;"></div>
<div class="t" style="left:1012.00px;top:373.00px;font-size:11px;line-height:11px;color:#262626;font-weight:400;transform:scaleX(0.8300);">R$ 0,0</div>
<div class="a" style="left:1080.4px;top:365px;width:84.5px;height:25px;background:#f2f2f2;"></div>
<div class="t" style="left:1090.90px;top:373.00px;font-size:11px;line-height:11px;color:#262626;font-weight:400;transform:scaleX(0.8300);">R$ 66.300,0</div>
<div class="a" style="left:137px;top:393px;width:76.1px;height:25px;background:#f2f2f2;"></div>
<div class="t" style="left:147.50px;top:401.00px;font-size:11px;line-height:11px;color:#262626;font-weight:400;transform:scaleX(0.8300);">R$ 16.950,0</div>
<div class="a" style="left:215.6px;top:393px;width:76.1px;height:25px;background:#f2f2f2;"></div>
<div class="t" style="left:226.10px;top:401.00px;font-size:11px;line-height:11px;color:#262626;font-weight:400;transform:scaleX(0.8300);">R$ 14.400,0</div>
<div class="a" style="left:294.2px;top:393px;width:76.1px;height:25px;background:#f2f2f2;"></div>
<div class="t" style="left:304.70px;top:401.00px;font-size:11px;line-height:11px;color:#262626;font-weight:400;transform:scaleX(0.8300);">R$ 18.700,0</div>
<div class="a" style="left:372.8px;top:393px;width:76.2px;height:25px;background:#f2f2f2;"></div>
<div class="t" style="left:383.30px;top:401.00px;font-size:11px;line-height:11px;color:#262626;font-weight:400;transform:scaleX(0.8300);">R$ 18.850,0</div>
<div class="a" style="left:451.5px;top:393px;width:75.8px;height:25px;background:#f2f2f2;"></div>
<div class="t" style="left:462.00px;top:401.00px;font-size:11px;line-height:11px;color:#262626;font-weight:400;transform:scaleX(0.8300);">R$ 0,0</div>
<div class="a" style="left:529.8px;top:393px;width:76.1px;height:25px;background:#f2f2f2;"></div>
<div class="t" style="left:540.30px;top:401.00px;font-size:11px;line-height:11px;color:#262626;font-weight:400;transform:scaleX(0.8300);">R$ 0,0</div>
<div class="a" style="left:608.4px;top:393px;width:76.1px;height:25px;background:#f2f2f2;"></div>
<div class="t" style="left:618.90px;top:401.00px;font-size:11px;line-height:11px;color:#262626;font-weight:400;transform:scaleX(0.8300);">R$ 0,0</div>
<div class="a" style="left:687px;top:393px;width:76.1px;height:25px;background:#f2f2f2;"></div>
<div class="t" style="left:697.50px;top:401.00px;font-size:11px;line-height:11px;color:#262626;font-weight:400;transform:scaleX(0.8300);">R$ 0,0</div>
<div class="a" style="left:765.6px;top:393px;width:76.5px;height:25px;background:#f2f2f2;"></div>
<div class="t" style="left:776.10px;top:401.00px;font-size:11px;line-height:11px;color:#262626;font-weight:400;transform:scaleX(0.8300);">R$ 0,0</div>
<div class="a" style="left:844.6px;top:393px;width:75.6px;height:25px;background:#f2f2f2;"></div>
<div class="t" style="left:855.10px;top:401.00px;font-size:11px;line-height:11px;color:#262626;font-weight:400;transform:scaleX(0.8300);">R$ 0,0</div>
<div class="a" style="left:922.7px;top:393px;width:76.3px;height:25px;background:#f2f2f2;"></div>
<div class="t" style="left:933.20px;top:401.00px;font-size:11px;line-height:11px;color:#262626;font-weight:400;transform:scaleX(0.8300);">R$ 0,0</div>
<div class="a" style="left:1001.5px;top:393px;width:76.4px;height:25px;background:#f2f2f2;"></div>
<div class="t" style="left:1012.00px;top:401.00px;font-size:11px;line-height:11px;color:#262626;font-weight:400;transform:scaleX(0.8300);">R$ 0,0</div>
<div class="a" style="left:1080.4px;top:393px;width:84.5px;height:25px;background:#f2f2f2;"></div>
<div class="t" style="left:1090.90px;top:401.00px;font-size:11px;line-height:11px;color:#262626;font-weight:400;transform:scaleX(0.8300);">R$ 68.900,0</div>
<div class="a" style="left:137px;top:421px;width:76.1px;height:25px;background:#4caf48;"></div>
<div class="t" style="left:147.50px;top:429.00px;font-size:11px;line-height:11px;color:#e2f5dc;font-weight:400;transform:scaleX(0.8300);">R$ 2.250,0</div>
<div class="a" style="left:215.6px;top:421px;width:76.1px;height:25px;background:#4caf48;"></div>
<div class="t" style="left:226.10px;top:429.00px;font-size:11px;line-height:11px;color:#e2f5dc;font-weight:400;transform:scaleX(0.8300);">R$ 3.300,0</div>
<div class="a" style="left:294.2px;top:421px;width:76.1px;height:25px;background:#f04a2e;"></div>
<div class="t" style="left:304.70px;top:429.00px;font-size:11px;line-height:11px;color:#ffe0d8;font-weight:400;transform:scaleX(0.8300);">-R$ 2.200,0</div>
<div class="a" style="left:372.8px;top:421px;width:76.2px;height:25px;background:#f04a2e;"></div>
<div class="t" style="left:383.30px;top:429.00px;font-size:11px;line-height:11px;color:#ffe0d8;font-weight:400;transform:scaleX(0.8300);">-R$ 5.950,0</div>
<div class="a" style="left:451.5px;top:421px;width:75.8px;height:25px;background:#f2f2f2;"></div>
<div class="t" style="left:462.00px;top:429.00px;font-size:11px;line-height:11px;color:#262626;font-weight:400;transform:scaleX(0.8300);">R$ 0,0</div>
<div class="a" style="left:529.8px;top:421px;width:76.1px;height:25px;background:#f2f2f2;"></div>
<div class="t" style="left:540.30px;top:429.00px;font-size:11px;line-height:11px;color:#262626;font-weight:400;transform:scaleX(0.8300);">R$ 0,0</div>
<div class="a" style="left:608.4px;top:421px;width:76.1px;height:25px;background:#f2f2f2;"></div>
<div class="t" style="left:618.90px;top:429.00px;font-size:11px;line-height:11px;color:#262626;font-weight:400;transform:scaleX(0.8300);">R$ 0,0</div>
<div class="a" style="left:687px;top:421px;width:76.1px;height:25px;background:#f2f2f2;"></div>
<div class="t" style="left:697.50px;top:429.00px;font-size:11px;line-height:11px;color:#262626;font-weight:400;transform:scaleX(0.8300);">R$ 0,0</div>
<div class="a" style="left:765.6px;top:421px;width:76.5px;height:25px;background:#f2f2f2;"></div>
<div class="t" style="left:776.10px;top:429.00px;font-size:11px;line-height:11px;color:#262626;font-weight:400;transform:scaleX(0.8300);">R$ 0,0</div>
<div class="a" style="left:844.6px;top:421px;width:75.6px;height:25px;background:#f2f2f2;"></div>
<div class="t" style="left:855.10px;top:429.00px;font-size:11px;line-height:11px;color:#262626;font-weight:400;transform:scaleX(0.8300);">R$ 0,0</div>
<div class="a" style="left:922.7px;top:421px;width:76.3px;height:25px;background:#f2f2f2;"></div>
<div class="t" style="left:933.20px;top:429.00px;font-size:11px;line-height:11px;color:#262626;font-weight:400;transform:scaleX(0.8300);">R$ 0,0</div>
<div class="a" style="left:1001.5px;top:421px;width:76.4px;height:25px;background:#f2f2f2;"></div>
<div class="t" style="left:1012.00px;top:429.00px;font-size:11px;line-height:11px;color:#262626;font-weight:400;transform:scaleX(0.8300);">R$ 0,0</div>
<div class="a" style="left:1080.4px;top:421px;width:84.5px;height:25px;background:#f04a2e;"></div>
<div class="t" style="left:1090.90px;top:429.00px;font-size:11px;line-height:11px;color:#ffe0d8;font-weight:400;transform:scaleX(0.8300);">-R$ 2.600,0</div>
<div class="a" style="left:137px;top:449px;width:76.1px;height:25px;background:#4caf48;"></div>
<div class="t" style="left:147.50px;top:457.00px;font-size:11px;line-height:11px;color:#e2f5dc;font-weight:400;transform:scaleX(0.8300);">R$ 4.250,0</div>
<div class="a" style="left:215.6px;top:449px;width:76.1px;height:25px;background:#4caf48;"></div>
<div class="t" style="left:226.10px;top:457.00px;font-size:11px;line-height:11px;color:#e2f5dc;font-weight:400;transform:scaleX(0.8300);">R$ 7.550,0</div>
<div class="a" style="left:294.2px;top:449px;width:76.1px;height:25px;background:#4caf48;"></div>
<div class="t" style="left:304.70px;top:457.00px;font-size:11px;line-height:11px;color:#e2f5dc;font-weight:400;transform:scaleX(0.8300);">R$ 5.350,0</div>
<div class="a" style="left:372.8px;top:449px;width:76.2px;height:25px;background:#f04a2e;"></div>
<div class="t" style="left:383.30px;top:457.00px;font-size:11px;line-height:11px;color:#ffe0d8;font-weight:400;transform:scaleX(0.8300);">-R$ 600,0</div>
<div class="a" style="left:451.5px;top:449px;width:75.8px;height:25px;background:#f04a2e;"></div>
<div class="t" style="left:462.00px;top:457.00px;font-size:11px;line-height:11px;color:#ffe0d8;font-weight:400;transform:scaleX(0.8300);">-R$ 600,0</div>
<div class="a" style="left:529.8px;top:449px;width:76.1px;height:25px;background:#f04a2e;"></div>
<div class="t" style="left:540.30px;top:457.00px;font-size:11px;line-height:11px;color:#ffe0d8;font-weight:400;transform:scaleX(0.8300);">-R$ 600,0</div>
<div class="a" style="left:608.4px;top:449px;width:76.1px;height:25px;background:#f04a2e;"></div>
<div class="t" style="left:618.90px;top:457.00px;font-size:11px;line-height:11px;color:#ffe0d8;font-weight:400;transform:scaleX(0.8300);">-R$ 600,0</div>
<div class="a" style="left:687px;top:449px;width:76.1px;height:25px;background:#f04a2e;"></div>
<div class="t" style="left:697.50px;top:457.00px;font-size:11px;line-height:11px;color:#ffe0d8;font-weight:400;transform:scaleX(0.8300);">-R$ 600,0</div>
<div class="a" style="left:765.6px;top:449px;width:76.5px;height:25px;background:#f04a2e;"></div>
<div class="t" style="left:776.10px;top:457.00px;font-size:11px;line-height:11px;color:#ffe0d8;font-weight:400;transform:scaleX(0.8300);">-R$ 600,0</div>
<div class="a" style="left:844.6px;top:449px;width:75.6px;height:25px;background:#f04a2e;"></div>
<div class="t" style="left:855.10px;top:457.00px;font-size:11px;line-height:11px;color:#ffe0d8;font-weight:400;transform:scaleX(0.8300);">-R$ 600,0</div>
<div class="a" style="left:922.7px;top:449px;width:76.3px;height:25px;background:#f04a2e;"></div>
<div class="t" style="left:933.20px;top:457.00px;font-size:11px;line-height:11px;color:#ffe0d8;font-weight:400;transform:scaleX(0.8300);">-R$ 600,0</div>
<div class="a" style="left:1001.5px;top:449px;width:76.4px;height:25px;background:#f04a2e;"></div>
<div class="t" style="left:1012.00px;top:457.00px;font-size:11px;line-height:11px;color:#ffe0d8;font-weight:400;transform:scaleX(0.8300);">-R$ 600,0</div>
<div class="a" style="left:1080.4px;top:449px;width:84.5px;height:25px;background:#f04a2e;"></div>
<div class="t" style="left:1090.90px;top:457.00px;font-size:11px;line-height:11px;color:#ffe0d8;font-weight:400;transform:scaleX(0.8300);">-R$ 600,0</div>
<div class="a" style="left:137px;top:477px;width:76.1px;height:25px;background:#f2f2f2;"></div>
<div class="t" style="left:147.50px;top:485.00px;font-size:11px;line-height:11px;color:#262626;font-weight:400;transform:scaleX(0.8300);">12%</div>
<div class="a" style="left:215.6px;top:477px;width:76.1px;height:25px;background:#f2f2f2;"></div>
<div class="t" style="left:226.10px;top:485.00px;font-size:11px;line-height:11px;color:#262626;font-weight:400;transform:scaleX(0.8300);">19%</div>
<div class="a" style="left:294.2px;top:477px;width:76.1px;height:25px;background:#f2f2f2;"></div>
<div class="t" style="left:304.70px;top:485.00px;font-size:11px;line-height:11px;color:#262626;font-weight:400;transform:scaleX(0.8300);">-13%</div>
<div class="a" style="left:372.8px;top:477px;width:76.2px;height:25px;background:#f2f2f2;"></div>
<div class="t" style="left:383.30px;top:485.00px;font-size:11px;line-height:11px;color:#262626;font-weight:400;transform:scaleX(0.8300);">-46%</div>
<div class="a" style="left:451.5px;top:477px;width:75.8px;height:25px;background:#f2f2f2;"></div>
<div class="a" style="left:529.8px;top:477px;width:76.1px;height:25px;background:#f2f2f2;"></div>
<div class="a" style="left:608.4px;top:477px;width:76.1px;height:25px;background:#f2f2f2;"></div>
<div class="a" style="left:687px;top:477px;width:76.1px;height:25px;background:#f2f2f2;"></div>
<div class="a" style="left:765.6px;top:477px;width:76.5px;height:25px;background:#f2f2f2;"></div>
<div class="a" style="left:844.6px;top:477px;width:75.6px;height:25px;background:#f2f2f2;"></div>
<div class="a" style="left:922.7px;top:477px;width:76.3px;height:25px;background:#f2f2f2;"></div>
<div class="a" style="left:1001.5px;top:477px;width:76.4px;height:25px;background:#f2f2f2;"></div>
<div class="a" style="left:1080.4px;top:477px;width:84.5px;height:25px;background:#f2f2f2;"></div>
<div class="t" style="left:1090.90px;top:485.00px;font-size:11px;line-height:11px;color:#262626;font-weight:400;transform:scaleX(0.8300);">-7%</div>
<div class="a" style="left:137px;top:531px;width:76.1px;height:26px;background:#f2f2f2;"></div>
<div class="t" style="left:147.50px;top:539.00px;font-size:11px;line-height:11px;color:#262626;font-weight:400;transform:scaleX(0.8300);">R$ 0,0</div>
<div class="a" style="left:215.6px;top:531px;width:76.1px;height:26px;background:#f2f2f2;"></div>
<div class="t" style="left:226.10px;top:539.00px;font-size:11px;line-height:11px;color:#262626;font-weight:400;transform:scaleX(0.8300);">R$ 0,0</div>
<div class="a" style="left:294.2px;top:531px;width:76.1px;height:26px;background:#f2f2f2;"></div>
<div class="t" style="left:304.70px;top:539.00px;font-size:11px;line-height:11px;color:#262626;font-weight:400;transform:scaleX(0.8300);">R$ 0,0</div>
<div class="a" style="left:372.8px;top:531px;width:76.2px;height:26px;background:#f2f2f2;"></div>
<div class="t" style="left:383.30px;top:539.00px;font-size:11px;line-height:11px;color:#262626;font-weight:400;transform:scaleX(0.8300);">R$ 7.500,0</div>
<div class="a" style="left:451.5px;top:531px;width:75.8px;height:26px;background:#f2f2f2;"></div>
<div class="t" style="left:462.00px;top:539.00px;font-size:11px;line-height:11px;color:#262626;font-weight:400;transform:scaleX(0.8300);">R$ 0,0</div>
<div class="a" style="left:529.8px;top:531px;width:76.1px;height:26px;background:#f2f2f2;"></div>
<div class="t" style="left:540.30px;top:539.00px;font-size:11px;line-height:11px;color:#262626;font-weight:400;transform:scaleX(0.8300);">R$ 0,0</div>
<div class="a" style="left:608.4px;top:531px;width:76.1px;height:26px;background:#f2f2f2;"></div>
<div class="t" style="left:618.90px;top:539.00px;font-size:11px;line-height:11px;color:#262626;font-weight:400;transform:scaleX(0.8300);">R$ 0,0</div>
<div class="a" style="left:687px;top:531px;width:76.1px;height:26px;background:#f2f2f2;"></div>
<div class="t" style="left:697.50px;top:539.00px;font-size:11px;line-height:11px;color:#262626;font-weight:400;transform:scaleX(0.8300);">R$ 0,0</div>
<div class="a" style="left:765.6px;top:531px;width:76.5px;height:26px;background:#f2f2f2;"></div>
<div class="t" style="left:776.10px;top:539.00px;font-size:11px;line-height:11px;color:#262626;font-weight:400;transform:scaleX(0.8300);">R$ 0,0</div>
<div class="a" style="left:844.6px;top:531px;width:75.6px;height:26px;background:#f2f2f2;"></div>
<div class="t" style="left:855.10px;top:539.00px;font-size:11px;line-height:11px;color:#262626;font-weight:400;transform:scaleX(0.8300);">R$ 0,0</div>
<div class="a" style="left:922.7px;top:531px;width:76.3px;height:26px;background:#f2f2f2;"></div>
<div class="t" style="left:933.20px;top:539.00px;font-size:11px;line-height:11px;color:#262626;font-weight:400;transform:scaleX(0.8300);">R$ 0,0</div>
<div class="a" style="left:1001.5px;top:531px;width:76.4px;height:26px;background:#f2f2f2;"></div>
<div class="t" style="left:1012.00px;top:539.00px;font-size:11px;line-height:11px;color:#262626;font-weight:400;transform:scaleX(0.8300);">R$ 0,0</div>
<div class="a" style="left:1080.4px;top:531px;width:84.5px;height:26px;background:#f2f2f2;"></div>
<div class="t" style="left:1090.90px;top:539.00px;font-size:11px;line-height:11px;color:#262626;font-weight:400;transform:scaleX(0.8300);">R$ 7.500,0</div>
<div class="a" style="left:137px;top:560px;width:76.1px;height:26px;background:#f2f2f2;"></div>
<div class="t" style="left:147.50px;top:568.00px;font-size:11px;line-height:11px;color:#262626;font-weight:400;transform:scaleX(0.8300);">R$ 0,0</div>
<div class="a" style="left:215.6px;top:560px;width:76.1px;height:26px;background:#f2f2f2;"></div>
<div class="t" style="left:226.10px;top:568.00px;font-size:11px;line-height:11px;color:#262626;font-weight:400;transform:scaleX(0.8300);">R$ 0,0</div>
<div class="a" style="left:294.2px;top:560px;width:76.1px;height:26px;background:#f2f2f2;"></div>
<div class="t" style="left:304.70px;top:568.00px;font-size:11px;line-height:11px;color:#262626;font-weight:400;transform:scaleX(0.8300);">R$ 0,0</div>
<div class="a" style="left:372.8px;top:560px;width:76.2px;height:26px;background:#f2f2f2;"></div>
<div class="t" style="left:383.30px;top:568.00px;font-size:11px;line-height:11px;color:#262626;font-weight:400;transform:scaleX(0.8300);">R$ 0,0</div>
<div class="a" style="left:451.5px;top:560px;width:75.8px;height:26px;background:#f2f2f2;"></div>
<div class="t" style="left:462.00px;top:568.00px;font-size:11px;line-height:11px;color:#262626;font-weight:400;transform:scaleX(0.8300);">R$ 0,0</div>
<div class="a" style="left:529.8px;top:560px;width:76.1px;height:26px;background:#f2f2f2;"></div>
<div class="t" style="left:540.30px;top:568.00px;font-size:11px;line-height:11px;color:#262626;font-weight:400;transform:scaleX(0.8300);">R$ 0,0</div>
<div class="a" style="left:608.4px;top:560px;width:76.1px;height:26px;background:#f2f2f2;"></div>
<div class="t" style="left:618.90px;top:568.00px;font-size:11px;line-height:11px;color:#262626;font-weight:400;transform:scaleX(0.8300);">R$ 0,0</div>
<div class="a" style="left:687px;top:560px;width:76.1px;height:26px;background:#f2f2f2;"></div>
<div class="t" style="left:697.50px;top:568.00px;font-size:11px;line-height:11px;color:#262626;font-weight:400;transform:scaleX(0.8300);">R$ 0,0</div>
<div class="a" style="left:765.6px;top:560px;width:76.5px;height:26px;background:#f2f2f2;"></div>
<div class="t" style="left:776.10px;top:568.00px;font-size:11px;line-height:11px;color:#262626;font-weight:400;transform:scaleX(0.8300);">R$ 0,0</div>
<div class="a" style="left:844.6px;top:560px;width:75.6px;height:26px;background:#f2f2f2;"></div>
<div class="t" style="left:855.10px;top:568.00px;font-size:11px;line-height:11px;color:#262626;font-weight:400;transform:scaleX(0.8300);">R$ 0,0</div>
<div class="a" style="left:922.7px;top:560px;width:76.3px;height:26px;background:#f2f2f2;"></div>
<div class="t" style="left:933.20px;top:568.00px;font-size:11px;line-height:11px;color:#262626;font-weight:400;transform:scaleX(0.8300);">R$ 0,0</div>
<div class="a" style="left:1001.5px;top:560px;width:76.4px;height:26px;background:#f2f2f2;"></div>
<div class="t" style="left:1012.00px;top:568.00px;font-size:11px;line-height:11px;color:#262626;font-weight:400;transform:scaleX(0.8300);">R$ 0,0</div>
<div class="a" style="left:1080.4px;top:560px;width:84.5px;height:26px;background:#f2f2f2;"></div>
<div class="t" style="left:1090.90px;top:568.00px;font-size:11px;line-height:11px;color:#262626;font-weight:400;transform:scaleX(0.8300);">R$ 0,0</div>
<div class="t" style="left:47.00px;top:513.00px;font-size:13.5px;line-height:13.5px;color:#111;font-weight:700;transform:scaleX(0.9474);">Contas a pagar e a receber</div>
<div class="a" style="left:36px;top:531px;width:98.5px;height:26px;background:#4caf48;"></div>
<div class="t" style="left:46.70px;top:539.00px;font-size:11.5px;line-height:11.5px;color:#d5f5c0;font-weight:700;transform:scaleX(0.8337);">Contas a Receber</div>
<div class="a" style="left:36px;top:560px;width:98.5px;height:26px;background:#f04a2e;"></div>
<div class="t" style="left:46.70px;top:568.00px;font-size:11.5px;line-height:11.5px;color:#ffe0d5;font-weight:700;transform:scaleX(0.8122);">Contas a Pagar</div>
<div class="a" style="left:36px;top:589px;width:98.5px;height:3.5px;background:#d9d9d9;"></div>
<div class="a" style="left:137px;top:589px;width:76.1px;height:3.5px;background:#f2f2f2;"></div>
<div class="a" style="left:215.6px;top:589px;width:76.1px;height:3.5px;background:#f2f2f2;"></div>
<div class="a" style="left:294.2px;top:589px;width:76.1px;height:3.5px;background:#f2f2f2;"></div>
<div class="a" style="left:372.8px;top:589px;width:76.2px;height:3.5px;background:#5aa552;"></div>
<div class="a" style="left:451.5px;top:589px;width:75.8px;height:3.5px;background:#f2f2f2;"></div>
<div class="a" style="left:529.8px;top:589px;width:76.1px;height:3.5px;background:#f2f2f2;"></div>
<div class="a" style="left:608.4px;top:589px;width:76.1px;height:3.5px;background:#f2f2f2;"></div>
<div class="a" style="left:687px;top:589px;width:76.1px;height:3.5px;background:#f2f2f2;"></div>
<div class="a" style="left:765.6px;top:589px;width:76.5px;height:3.5px;background:#f2f2f2;"></div>
<div class="a" style="left:844.6px;top:589px;width:75.6px;height:3.5px;background:#f2f2f2;"></div>
<div class="a" style="left:922.7px;top:589px;width:76.3px;height:3.5px;background:#f2f2f2;"></div>
<div class="a" style="left:1001.5px;top:589px;width:76.4px;height:3.5px;background:#f2f2f2;"></div>
<div class="a" style="left:1080.4px;top:589px;width:84.5px;height:3.5px;background:#5aa552;"></div>
<div class="a" style="left:0px;top:334.6px;width:1174px;height:1px;background:#a8a8a8;"></div>
<div class="a" style="left:1174px;top:181px;width:19px;height:415px;background:#e6e6e6;"></div>
<div class="a" style="left:1177px;top:182.5px;width:13px;height:13px;background:#ffffff;box-sizing:border-box;border:1px solid #a0a0a0;"></div>
<svg class="a" style="left:1180px;top:187px;" width="7" height="4" viewBox="0 0 7 4"><path d="M0 4H7L3.5 0Z" fill="#555"/></svg>
<div class="a" style="left:1177px;top:196px;width:13px;height:289.5px;background:#ffffff;box-sizing:border-box;border:1px solid #a0a0a0;"></div>
<div class="a" style="left:1177px;top:578px;width:13px;height:13.5px;background:#ffffff;box-sizing:border-box;border:1px solid #a0a0a0;"></div>
<svg class="a" style="left:1180px;top:583px;" width="7" height="4" viewBox="0 0 7 4"><path d="M0 0H7L3.5 4Z" fill="#555"/></svg>
<div class="a" style="left:0px;top:592.5px;width:1193px;height:24.5px;background:#e6e6e6;"></div>
<div class="a" style="left:0px;top:592px;width:158px;height:1px;background:#ababab;"></div>
<div class="a" style="left:247px;top:592px;width:946px;height:1px;background:#ababab;"></div>
<svg class="a" style="left:23px;top:600.5px;" width="5" height="6.5" viewBox="0 0 5 6.5"><path d="M5 0V6.5L0 3.25Z" fill="#217346"/></svg>
<svg class="a" style="left:48px;top:600.5px;" width="5" height="6.5" viewBox="0 0 5 6.5"><path d="M0 0V6.5L5 3.25Z" fill="#217346"/></svg>
<div class="a" style="left:70.5px;top:606px;width:2px;height:2px;background:#217346;"></div>
<div class="a" style="left:74.5px;top:606px;width:2px;height:2px;background:#217346;"></div>
<div class="a" style="left:78.5px;top:606px;width:2px;height:2px;background:#217346;"></div>
<div class="a" style="left:87px;top:595px;width:1px;height:18px;background:#c0c0c0;"></div>
<div class="t" style="left:99.70px;top:598.00px;font-size:12px;line-height:12px;color:#555;font-weight:400;transform:scaleX(0.8640);">PC_transf</div>
<div class="a" style="left:158px;top:592.5px;width:89px;height:21px;background:#ffffff;"></div>
<div class="a" style="left:158px;top:611.7px;width:89px;height:2px;background:#217346;"></div>
<div class="t" style="left:168.75px;top:599.00px;font-size:12px;line-height:12px;color:#217346;font-weight:700;transform:scaleX(0.8267);">CF_FC_banco</div>
<div class="t" style="left:258.00px;top:598.00px;font-size:12px;line-height:12px;color:#555;font-weight:400;transform:scaleX(0.7278);">CF_</div>
<div class="a" style="left:282.5px;top:606px;width:2px;height:2px;background:#217346;"></div>
<div class="a" style="left:286.5px;top:606px;width:2px;height:2px;background:#217346;"></div>
<div class="a" style="left:290.5px;top:606px;width:2px;height:2px;background:#217346;"></div>
<svg class="a" style="left:303px;top:597.5px;" width="14" height="14" viewBox="0 0 14 14"><circle cx="7" cy="7" r="6.3" fill="none" stroke="#666" stroke-width="1.2"/><path d="M7 3.5V10.5M3.5 7H10.5" stroke="#666" stroke-width="1.4"/></svg>
<div class="a" style="left:334.5px;top:600.5px;width:1.3px;height:1.3px;background:#aaa;"></div>
<div class="a" style="left:334.5px;top:604px;width:1.3px;height:1.3px;background:#aaa;"></div>
<div class="a" style="left:334.5px;top:607.5px;width:1.3px;height:1.3px;background:#aaa;"></div>
<div class="a" style="left:349px;top:598px;width:14px;height:13px;background:#ffffff;box-sizing:border-box;border:1px solid #a0a0a0;"></div>
<svg class="a" style="left:353px;top:601.5px;" width="4" height="6" viewBox="0 0 4 6"><path d="M4 0V6L0 3Z" fill="#555"/></svg>
<div class="a" style="left:362px;top:598px;width:662px;height:13px;background:#ffffff;box-sizing:border-box;border:1px solid #a0a0a0;"></div>
<div class="a" style="left:1158.5px;top:598.5px;width:13px;height:12px;background:#ffffff;box-sizing:border-box;border:1px solid #a0a0a0;"></div>
<svg class="a" style="left:1163px;top:601.5px;" width="4" height="6" viewBox="0 0 4 6"><path d="M0 0V6L4 3Z" fill="#555"/></svg>
<div class="a" style="left:0px;top:617px;width:1193px;height:19px;background:#f3f2f1;"></div>
<div class="t" style="left:6.70px;top:622.00px;font-size:11.5px;line-height:11.5px;color:#444;font-weight:400;transform:scaleX(0.8588);">Pronto</div>
<svg class="a" style="left:54px;top:621px;" width="13" height="11" viewBox="0 0 13 11"><rect x="0.5" y="0.5" width="12" height="10" fill="none" stroke="#555"/><path d="M0.5 3H12.5" stroke="#555"/><rect x="2" y="4.5" width="3" height="1" fill="#555"/><rect x="2" y="7" width="3" height="1" fill="#555"/><circle cx="9" cy="7" r="2.2" fill="none" stroke="#555" stroke-width="1.2"/></svg>
<svg class="a" style="left:82px;top:619.5px;" width="13" height="13" viewBox="0 0 13 13"><circle cx="6" cy="2.5" r="1.7" fill="none" stroke="#555"/><path d="M1 5L6 6L11 5M6 6V9L3 12.5M6 9L8 11" stroke="#555" fill="none"/><path d="M8.5 9L12.5 13M12.5 9L8.5 13" stroke="#555"/></svg>
<div class="t" style="left:97.00px;top:622.00px;font-size:11.5px;line-height:11.5px;color:#444;font-weight:400;transform:scaleX(0.8705);">Acessibilidade: investigar</div>
<div class="a" style="left:936px;top:617px;width:35px;height:19px;background:#dcdcdc;"></div>
<svg class="a" style="left:947.5px;top:621px;" width="12" height="11" viewBox="0 0 12 11"><path d="M0.5 0.5H11.5V10.5H0.5ZM0.5 3.8H11.5M0.5 7.2H11.5M4.2 0.5V10.5M7.8 0.5V10.5" stroke="#444" fill="none"/></svg>
<svg class="a" style="left:982px;top:621px;" width="12" height="11" viewBox="0 0 12 11"><rect x="0.5" y="0.5" width="11" height="10" fill="none" stroke="#444"/><rect x="3" y="2.5" width="6" height="6" fill="none" stroke="#444"/><path d="M4.5 4.5H7.5M4.5 6.5H7.5" stroke="#444"/></svg>
<svg class="a" style="left:1017px;top:620.5px;" width="12" height="12" viewBox="0 0 12 12"><path d="M0.5 0.5H11.5V11.5H0.5ZM3.5 0.5V6.5H8.5V0.5" stroke="#444" fill="none"/></svg>
<div class="a" style="left:1046.5px;top:626.5px;width:6px;height:1px;background:#444;"></div>
<div class="a" style="left:1058px;top:626.5px;width:87px;height:1px;background:#666;"></div>
<div class="a" style="left:1094.5px;top:622px;width:4px;height:9px;background:#333;"></div>
<div class="a" style="left:1101px;top:625px;width:1px;height:4px;background:#666;"></div>
<svg class="a" style="left:1149px;top:622.5px;" width="8" height="8" viewBox="0 0 8 8"><path d="M4 0V8M0 4H8" stroke="#444"/></svg>
<div class="t" style="left:1168.30px;top:622.00px;font-size:11px;line-height:11px;color:#444;font-weight:400;transform:scaleX(0.8176);">90%</div>
<div class="a" style="left:0px;top:636px;width:1200px;height:6px;background:#2e1d42;"></div>
<div class="a" style="left:0px;top:636px;width:41px;height:6px;background:#1c2a3c;"></div>
<div class="a" style="left:41px;top:636px;width:300px;height:6px;background:#262626;"></div>
</body></html>
